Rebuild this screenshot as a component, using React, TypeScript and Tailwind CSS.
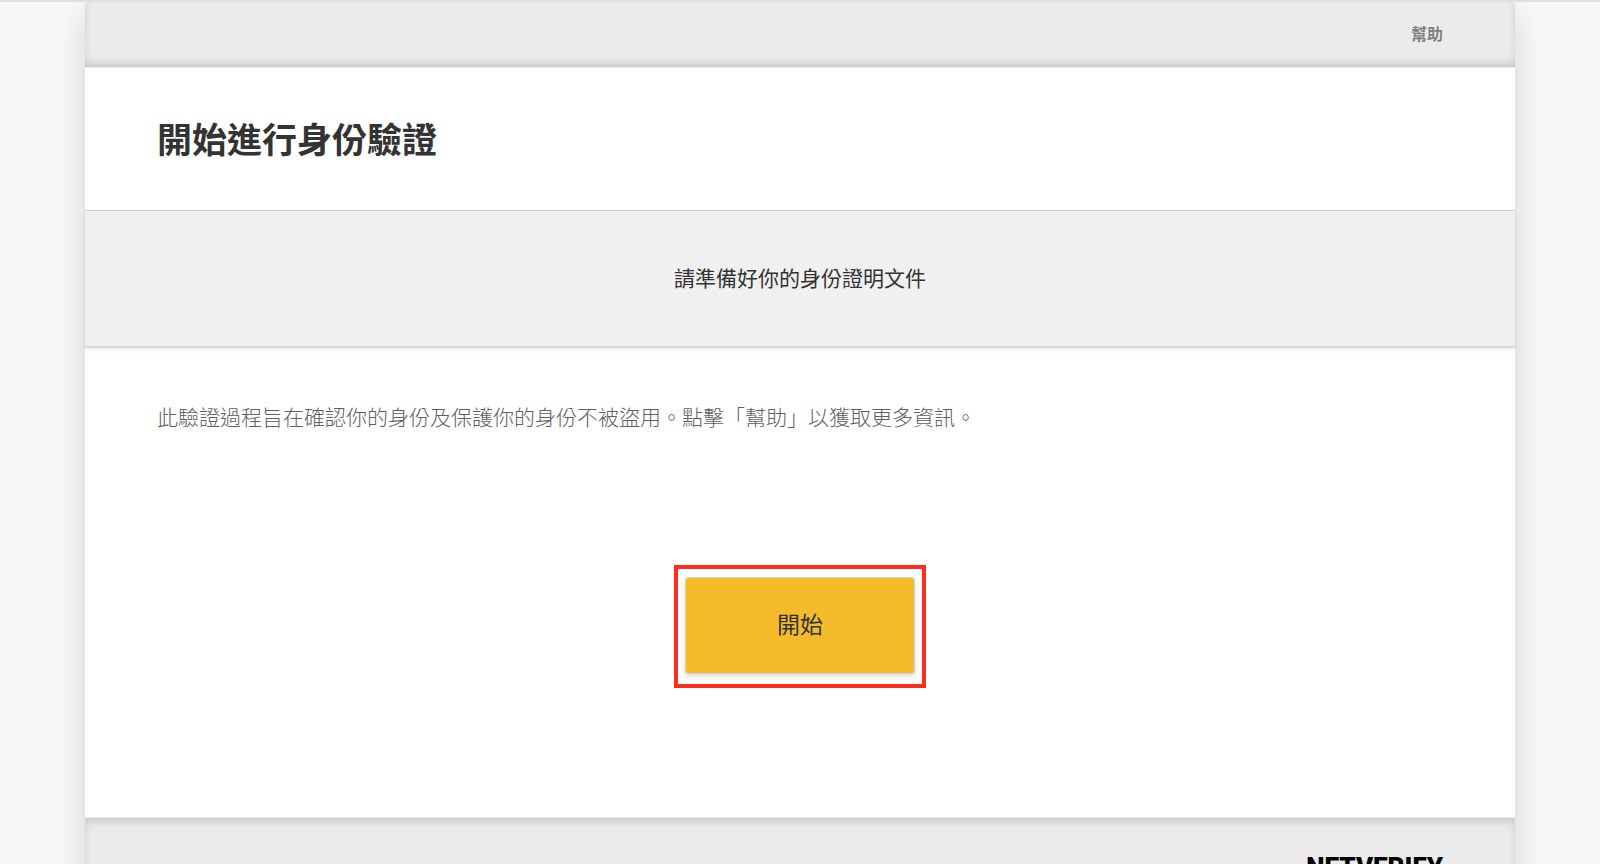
export default function App() {
  return (
    <div className="h-screen overflow-hidden border-t-2 border-[#e0e0e0] bg-[#f7f7f7] px-[85px] font-['Noto_Sans_CJK_TC',sans-serif] text-[#333]">
      <div className="flex min-h-full flex-col rounded-t-[4px] bg-white shadow-[0_14px_30px_rgba(0,0,0,0.14)]">
        <header className="flex h-[66px] items-center justify-end rounded-t-[4px] border-b border-[#ebebeb] bg-[#ebebeb] px-18 pb-1 shadow-[inset_0_-4px_8px_-1px_rgba(0,0,0,0.16)]">
          <a href="#help" className="text-base font-bold text-[#808080]">
            幫助
          </a>
        </header>
        <main>
          <div className="flex h-[142px] items-center px-18 pb-0.5">
            <h1 className="text-[35px] font-bold">開始進行身份驗證</h1>
          </div>
          <section className="flex h-[138px] items-center justify-center border-t border-b-2 border-t-[#cfcfcf] border-b-[#dadada] bg-[#f0f0f0] pb-0.5 shadow-[0_2px_5px_rgba(0,0,0,0.08)]">
            <h2 className="text-[21px] font-normal">請準備好你的身份證明文件</h2>
          </section>
          <div className="flex h-[469px] flex-col px-18 pt-[52px]">
            <p className="text-[21px] leading-8 font-light text-[#606060]">
              此驗證過程旨在確認你的身份及保護你的身份不被盜用。點擊「幫助」以獲取更多資訊。
            </p>
            <div className="mt-[133px] self-center border-4 border-[#ff2d1c] px-[7px] pt-2 pb-[10px]">
              <button
                type="button"
                className="h-[97px] w-[230px] cursor-pointer rounded-[4px] border border-[#d0d0d0] bg-[#f4bb2b] pb-1 text-[23px] shadow-[0_2px_5px_rgba(0,0,0,0.15)]"
              >
                開始
              </button>
            </div>
          </div>
        </main>
        <footer className="flex h-40 items-start justify-end border-t border-[#ebebeb] bg-[#ebebeb] px-18 pt-8 shadow-[inset_0_4px_8px_-1px_rgba(0,0,0,0.16)]">
          <span className="font-['Roboto',sans-serif] text-[26px] leading-[34px] font-black text-black">NETVERIFY</span>
        </footer>
      </div>
    </div>
  );
}
